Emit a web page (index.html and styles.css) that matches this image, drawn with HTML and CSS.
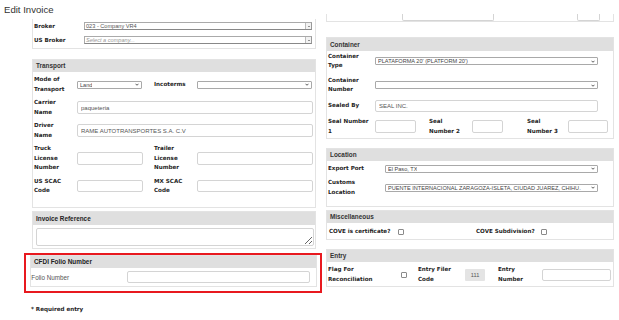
FILE: index.html
```html
<!DOCTYPE html>
<html lang="en">
<head>
    <meta charset="UTF-8">
    <meta name="viewport" content="width=device-width, initial-scale=1.0">
    <title>Edit Invoice</title>
    <link rel="stylesheet" href="styles.css">
</head>
<body>
    <h1 class="page-title">Edit Invoice</h1>

    <div class="layout">
        <!-- left column -->
        <div class="column">
            <div class="panel panel-broker">
                <div class="grid grid-broker">
                    <span class="lbl">Broker</span>
                    <div class="chosen">
                        <span class="chosen-text">023 - Company VR4</span>
                        <span class="chosen-btn"><i></i></span>
                    </div>
                    <span class="lbl">US Broker</span>
                    <div class="chosen">
                        <span class="chosen-text placeholder">Select a company...</span>
                        <span class="chosen-btn"><i></i></span>
                    </div>
                </div>
            </div>

            <div class="panel panel-transport">
                <div class="panel-head">Transport</div>
                <div class="grid grid-transport">
                    <span class="lbl">Mode of<br>Transport</span>
                    <div class="select w-65"><span>Land</span><svg width="4" height="3" viewBox="0 0 8 5"><path d="M1 1l3 3 3-3" stroke="#333" stroke-width="1.6" fill="none"/></svg></div>
                    <span class="lbl">Incoterms</span>
                    <div class="select w-115"><span></span><svg width="4" height="3" viewBox="0 0 8 5"><path d="M1 1l3 3 3-3" stroke="#333" stroke-width="1.6" fill="none"/></svg></div>

                    <span class="lbl">Carrier<br>Name</span>
                    <input class="field span-rest w-236" type="text" value="paqueteria">

                    <span class="lbl">Driver<br>Name</span>
                    <input class="field span-rest w-236" type="text" value="RAME AUTOTRANSPORTES S.A. C.V">

                    <span class="lbl">Truck<br>License<br>Number</span>
                    <input class="field w-66" type="text">
                    <span class="lbl">Trailer<br>License<br>Number</span>
                    <input class="field w-116" type="text">

                    <span class="lbl">US SCAC<br>Code</span>
                    <input class="field w-66" type="text">
                    <span class="lbl">MX SCAC<br>Code</span>
                    <input class="field w-116" type="text">
                </div>
            </div>

            <div class="panel panel-reference">
                <div class="panel-head head-arial">Invoice Reference</div>
                <div class="panel-body">
                    <textarea class="notes"></textarea>
                </div>
            </div>

            <div class="highlight">
                <div class="panel">
                    <div class="panel-head head-arial">CFDI Folio Number</div>
                    <div class="grid grid-folio">
                        <span class="plain-lbl">Folio Number</span>
                        <input class="field w-183" type="text">
                    </div>
                </div>
            </div>

            <p class="required lbl">* Required entry</p>
        </div>

        <!-- right column -->
        <div class="column">
            <div class="panel panel-cut">
                <span class="cut-input cut-a"></span>
                <span class="cut-input cut-b"></span>
            </div>

            <div class="panel panel-container">
                <div class="panel-head">Container</div>
                <div class="grid grid-container">
                    <span class="lbl">Container<br>Type</span>
                    <div class="select span-rest w-223"><span>PLATAFORMA 20' (PLATFORM 20')</span><svg width="4" height="3" viewBox="0 0 8 5"><path d="M1 1l3 3 3-3" stroke="#333" stroke-width="1.6" fill="none"/></svg></div>

                    <span class="lbl">Container<br>Number</span>
                    <div class="select span-rest w-223"><span></span><svg width="4" height="3" viewBox="0 0 8 5"><path d="M1 1l3 3 3-3" stroke="#333" stroke-width="1.6" fill="none"/></svg></div>

                    <span class="lbl">Sealed By</span>
                    <input class="field span-rest w-223" type="text" value="SEAL INC.">

                    <span class="lbl">Seal Number<br>1</span>
                    <input class="field w-41" type="text">
                    <span class="lbl">Seal<br>Number 2</span>
                    <input class="field w-31" type="text">
                    <span class="lbl">Seal<br>Number 3</span>
                    <input class="field w-40" type="text">
                </div>
            </div>

            <div class="panel panel-location">
                <div class="panel-head">Location</div>
                <div class="grid grid-location">
                    <span class="lbl">Export Port</span>
                    <div class="select w-213"><span>El Paso, TX</span><svg width="4" height="3" viewBox="0 0 8 5"><path d="M1 1l3 3 3-3" stroke="#333" stroke-width="1.6" fill="none"/></svg></div>

                    <span class="lbl">Customs<br>Location</span>
                    <div class="select w-213"><span>PUENTE INTERNACIONAL ZARAGOZA-ISLETA, CIUDAD JUAREZ, CHIHU.</span><svg width="4" height="3" viewBox="0 0 8 5"><path d="M1 1l3 3 3-3" stroke="#333" stroke-width="1.6" fill="none"/></svg></div>
                </div>
            </div>

            <div class="panel panel-misc">
                <div class="panel-head">Miscellaneous</div>
                <div class="grid grid-misc">
                    <span class="lbl">COVE is certificate?</span>
                    <span class="check"></span>
                    <span class="lbl">COVE Subdivision?</span>
                    <span class="check"></span>
                </div>
            </div>

            <div class="panel panel-entry">
                <div class="panel-head">Entry</div>
                <div class="grid grid-entry">
                    <span class="lbl">Flag For<br>Reconciliation</span>
                    <span class="check"></span>
                    <span class="lbl">Entry Filer<br>Code</span>
                    <span class="readonly">111</span>
                    <span class="lbl">Entry<br>Number</span>
                    <input class="field w-68" type="text">
                </div>
            </div>
        </div>
    </div>
</body>
</html>
```

FILE: styles.css
```css
body {
    margin: 0;
    font-family: "Liberation Sans", Arial, sans-serif;
    color: #333;
    background-color: #fff;
}

.page-title {
    margin: 0;
    height: 14px;
    box-sizing: border-box;
    padding: 5px 0 0 4px;
    font-size: 9.6px;
    line-height: 10px;
    font-weight: normal;
    color: #333;
}

.layout {
    display: grid;
    grid-template-columns: 284px 288px;
    column-gap: 10px;
    padding-left: 32px;
    align-items: start;
}

.column {
    display: flex;
    flex-direction: column;
}

/* panels */
.panel {
    border: 1px solid #e3e3e3;
    background-color: #fff;
}

.panel-head {
    height: 12px;
    line-height: 12px;
    padding-left: 3px;
    background-color: #dfdfdf;
    font-size: 6.4px;
    font-weight: bold;
    color: #333;
}

.head-arial {
    color: #222;
}

.panel-body {
    padding: 3px 2px 2px 2px;
}

.grid {
    display: grid;
    align-items: center;
    justify-items: start;
}

.lbl {
    font-family: "DejaVu Sans", Verdana, sans-serif;
    font-weight: bold;
    font-size: 5.6px;
    line-height: 9.5px;
    color: #1e1e1e;
}

.plain-lbl {
    font-size: 6.3px;
    color: #555;
}

.span-rest {
    grid-column: 2 / -1;
}

/* inputs */
.field {
    box-sizing: border-box;
    height: 12.5px;
    margin: 0;
    padding: 0 3px;
    border: 1px solid #d4d4d4;
    border-radius: 2px;
    font-family: "Liberation Sans", Arial, sans-serif;
    font-size: 6px;
    color: #555;
    background-color: #fff;
    outline: none;
}

.select {
    box-sizing: border-box;
    height: 8px;
    display: flex;
    align-items: center;
    justify-content: space-between;
    padding: 0 2px 0 2px;
    border: 1px solid #a9a9a9;
    border-radius: 1px;
    font-size: 5.6px;
    line-height: 6px;
    color: #444;
    background-color: #fff;
    overflow: hidden;
}

.select span {
    white-space: nowrap;
    overflow: hidden;
}

.select svg {
    flex: none;
    margin-left: 2px;
}

.chosen {
    box-sizing: border-box;
    width: 228px;
    height: 8px;
    display: flex;
    align-items: stretch;
    border: 1px solid #aaa;
    border-right-color: #999;
    border-bottom-color: #888;
    background-color: #fff;
}

.chosen-text {
    flex: 1;
    padding-left: 1px;
    font-size: 5.6px;
    line-height: 6px;
    color: #555;
}

.chosen-text.placeholder {
    font-style: italic;
    color: #999;
}

.chosen-btn {
    width: 5px;
    border-left: 1px solid #bbb;
    background-color: #f2f2f2;
    display: flex;
    align-items: center;
    justify-content: center;
}

.chosen-btn i {
    width: 0;
    height: 0;
    border-left: 1px solid transparent;
    border-right: 1px solid transparent;
    border-top: 1.5px solid #333;
}

.check {
    box-sizing: border-box;
    width: 6px;
    height: 6px;
    border: 1px solid #8a8a8a;
    border-radius: 1px;
    background-color: #fff;
}

.readonly {
    box-sizing: border-box;
    width: 20px;
    height: 12.5px;
    line-height: 12.5px;
    text-align: center;
    background-color: #e4e4e4;
    border-radius: 1px;
    font-size: 5.6px;
    color: #555;
}

.notes {
    display: block;
    box-sizing: border-box;
    width: 278px;
    height: 18px;
    margin: 0 0 0 1px;
    padding: 1px;
    border: 1px solid #d4d4d4;
    border-radius: 2px;
    font-size: 6px;
    outline: none;
}

/* widths */
.w-31 { width: 31px; }
.w-40 { width: 40px; }
.w-41 { width: 41px; }
.w-65 { width: 65px; }
.w-66 { width: 66px; }
.w-68 { width: 68.5px; }
.w-115 { width: 115px; }
.w-116 { width: 116px; }
.w-183 { width: 182.7px; }
.w-213 { width: 213.3px; }
.w-223 { width: 222.6px; }
.w-236 { width: 236px; }

/* left column */
.panel-broker {
    margin-top: 5px;
    border-top: none;
}

.grid-broker {
    grid-template-columns: 50px 1fr;
    row-gap: 6px;
    padding: 3px 1px 4px 1px;
    align-items: center;
}

.grid-broker .lbl {
    line-height: 8px;
}

.panel-transport {
    margin-top: 10px;
}

.grid-transport {
    grid-template-columns: 43px 77px 43px 1fr;
    row-gap: 4px;
    padding: 3px 2px 11.5px 1px;
}

.panel-reference {
    margin-top: 3px;
}

.panel-reference .panel-head {
    height: 13px;
    line-height: 13px;
}

.highlight {
    margin: 3.7px -6px 0 -8px;
    padding: 0 3px 3.7px 4px;
    border: 2px solid #e8191f;
}

.grid-folio {
    grid-template-columns: 96px 1fr;
    padding: 3.3px 2px 3px 0.3px;
}

.required {
    margin: 12px 0 0 -1px;
}

/* right column */
.panel-cut {
    position: relative;
    height: 7px;
    border-top: none;
}

.cut-input {
    position: absolute;
    bottom: 0;
    height: 6px;
    border: 1px solid #d4d4d4;
    border-top: none;
    border-radius: 0 0 2px 2px;
}

.cut-a {
    left: 75px;
    width: 90px;
}

.cut-b {
    left: 250px;
    width: 21px;
}

.panel-container {
    margin-top: 14.7px;
}

.panel-container .panel-head {
    height: 13px;
    line-height: 13px;
}

.grid-container {
    grid-template-columns: 47px 54px 43px 55px 41px 1fr;
    row-gap: 5px;
    padding: 1px 2px 2px 1px;
}

.panel-location {
    margin-top: 9px;
}

.grid-location {
    grid-template-columns: 57px 1fr;
    row-gap: 4.5px;
    padding: 3px 2px 8.5px 1px;
}

.panel-misc {
    margin-top: 3.3px;
}

.grid-misc {
    grid-template-columns: 69px 78px 65px 1fr;
    padding: 4px 2px 2.5px 2px;
}

.panel-entry {
    margin-top: 9.4px;
}

.grid-entry {
    grid-template-columns: 73px 17px 47px 33px 44px 1fr;
    padding: 3px 2px 2px 1px;
}
```
